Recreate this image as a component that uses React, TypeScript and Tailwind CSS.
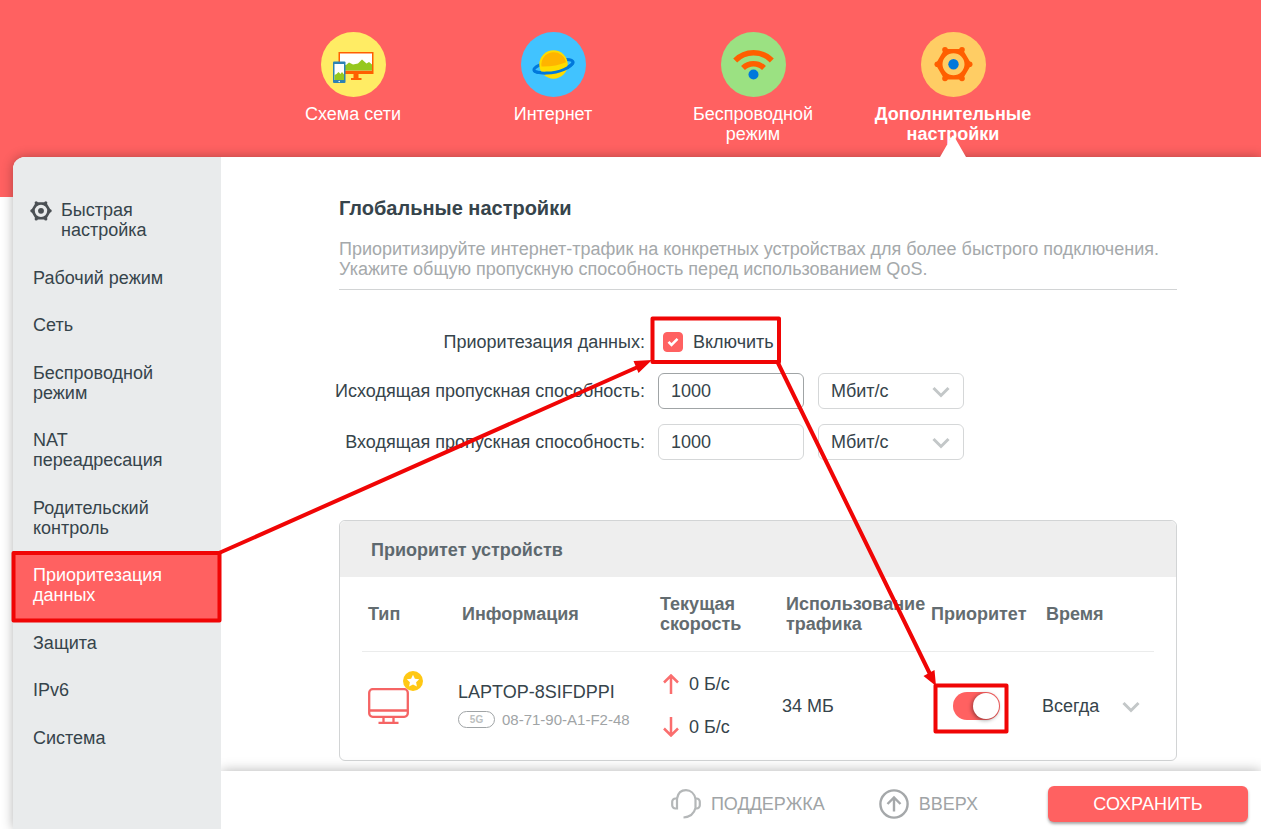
import type { ReactNode } from 'react'

const navItems = [
  { label: 'Схема сети', icon: <NetworkIcon />, active: false },
  { label: 'Интернет', icon: <PlanetIcon />, active: false },
  { label: 'Беспроводной режим', icon: <WifiIcon />, active: false },
  { label: 'Дополнительные настройки', icon: <GearIcon />, active: true },
]

const menuItems = [
  'Рабочий режим',
  'Сеть',
  'Беспроводной режим',
  'NAT переадресация',
  'Родительский контроль',
  'Приоритезация данных',
  'Защита',
  'IPv6',
  'Система',
]

const activeItem = 'Приоритезация данных'

function NetworkIcon() {
  return (
    <svg viewBox="0 0 65 65" className="w-[65px] h-[65px]" aria-hidden="true">
      <circle cx="32.5" cy="32.5" r="32.5" fill="#ffec64" />
      <rect x="17.5" y="20" width="35" height="22" fill="#ff5f00" />
      <rect x="19" y="21.5" width="32" height="17" fill="#fff" />
      <path d="M19 38.500V34l6-1 3-2.500 4 2 5-1 4-4 4.500 4 2.500-1.500 3 2.500v6z" fill="#96c81e" />
      <path d="M32.500 42h5v4h3v2h-10.500v-2h2.500z" fill="#ff5f00" />
      <rect x="12" y="29.5" width="12.5" height="21.5" rx="1" fill="#2d82b4" />
      <rect x="13.5" y="32" width="9.5" height="16" fill="#fff" />
      <path d="M13.500 48v-5l2-1 2-2 2 2 1.500-2 2 2.500V48z" fill="#96c81e" />
      <circle cx="18.2" cy="49.5" r="0.8" fill="#fff" />
    </svg>
  )
}

function PlanetIcon() {
  return (
    <svg viewBox="0 0 65 65" className="w-[65px] h-[65px]" aria-hidden="true">
      <circle cx="32.5" cy="32.5" r="32.5" fill="#41c3ff" />
      <ellipse cx="32.5" cy="34" rx="20" ry="5.2" transform="rotate(-12 32.5 34)" fill="none" stroke="#0078dc" strokeWidth="3" />
      <circle cx="32.5" cy="32.5" r="14.2" fill="#ffdc00" />
      <path d="M20.500 34.500a12.300 12.300 0 0 1 11-14.200a12.300 12.300 0 0 1 13.500 10q-10 4.500-24.500 4.200z" fill="#ffb400" />
      <path d="M13 38.400c3 4 20 3.500 30-.9c5-2.200 8.500-5 9.200-7.200" fill="none" stroke="#0078dc" strokeWidth="3" />
    </svg>
  )
}

function WifiIcon() {
  return (
    <svg viewBox="0 0 65 65" className="w-[65px] h-[65px]" aria-hidden="true">
      <circle cx="32.5" cy="32.5" r="32.5" fill="#9be182" />
      <g fill="none" stroke="#ff5f00" strokeWidth="5.5">
        <path d="M14.200 28.500a25.500 25.500 0 0 1 36.600 0" />
        <path d="M22 36a15 15 0 0 1 21 0" />
      </g>
      <circle cx="32.5" cy="42.5" r="5" fill="#0078dc" />
    </svg>
  )
}

function GearShape({ center, body }: { center: string; body: string }) {
  return (
    <>
      <g fill={body}>
        <path
          fillRule="evenodd"
          d="M23.500 17h18l9 15.200-9 15.300h-18l-9-15.300zM32.500 21.200a11 11 0 1 0 0 22a11 11 0 0 0 0-22z"
        />
        <circle cx="24" cy="17.8" r="2.8" />
        <circle cx="41" cy="17.8" r="2.8" />
        <circle cx="24" cy="46.5" r="2.8" />
        <circle cx="41" cy="46.5" r="2.8" />
        <circle cx="16.3" cy="32.2" r="2.8" />
        <circle cx="48.7" cy="32.2" r="2.8" />
      </g>
      <circle cx="32.5" cy="32.2" r="5.2" fill={center} />
    </>
  )
}

function GearIcon() {
  return (
    <svg viewBox="0 0 65 65" className="w-[65px] h-[65px]" aria-hidden="true">
      <circle cx="32.5" cy="32.5" r="32.5" fill="#ffcd64" />
      <GearShape center="#0078dc" body="#ff5f00" />
    </svg>
  )
}

function Chevron({ className }: { className: string }) {
  return (
    <svg viewBox="0 0 18 12" className={`w-[18px] h-3 pointer-events-none ${className}`} aria-hidden="true">
      <path d="M1.500 2l7.500 7.500L16.500 2" fill="none" stroke="#c3c7c8" strokeWidth="3" />
    </svg>
  )
}

function SpeedArrow({ down }: { down?: boolean }) {
  return (
    <svg viewBox="0 0 16 20" className="w-4 h-5" aria-hidden="true">
      <path
        d={down ? 'M8 0v19M1 11.500l7 7 7-7' : 'M8 20V1M1 8.500l7-7 7 7'}
        fill="none"
        stroke="#fa6e6e"
        strokeWidth="2.5"
      />
    </svg>
  )
}

function DeviceIcon() {
  return (
    <svg viewBox="0 0 56 70" className="w-14 h-[70px]" role="img" aria-label="Компьютер">
      <g fill="none" stroke="#f56464" strokeWidth="2.3">
        <rect x="1.2" y="18.2" width="38.6" height="27.6" rx="3.5" />
        <path d="M1 39.500h39M15.500 46v5M25.500 46v5M10.500 51.800h20" />
      </g>
      <circle cx="45" cy="10" r="10" fill="#ffc814" />
      <path d="M45 3.700l1.900 4 4.300.6-3.100 3 .8 4.300-3.900-2-3.900 2 .8-4.300-3.100-3 4.300-.6z" fill="#fff" />
    </svg>
  )
}

function Header() {
  return (
    <header className="h-[197px] bg-[#ff6161] pl-[45px] pt-8">
      <nav className="flex justify-center">
        {navItems.map((item) => (
          <a
            key={item.label}
            href="#"
            className={`relative flex h-[125px] w-[200px] flex-col items-center gap-[7px] px-5 text-center text-white ${item.active ? 'font-bold' : ''}`}
          >
            {item.icon}
            <span>{item.label}</span>
            {item.active && (
              <svg viewBox="0 0 26 23" className="absolute bottom-0 left-[87px] z-20 h-[23px] w-[26px]" aria-hidden="true">
                <path d="M0 23L11.500 3q1.500-3 3 0L26 23z" fill="#fff" />
              </svg>
            )}
          </a>
        ))}
      </nav>
    </header>
  )
}

function Sidebar() {
  return (
    <aside className="relative z-10 w-[208px] shrink-0 rounded-tl-xl bg-[#e9ebec] pt-[29px]">
      <ul>
        <li>
          <a href="#" className="flex gap-[9px] pt-[14px] pr-12 pb-[14px] pl-[17px]">
            <svg viewBox="13 13 39 39" className="h-[22px] w-[22px] shrink-0" aria-hidden="true">
              <GearShape center="#4b5054" body="#4b5054" />
            </svg>
            Быстрая настройка
          </a>
        </li>
        {menuItems.map((item, i) => (
          <li key={item}>
            <a
              href="#"
              className={`block pt-[14px] pr-12 pl-5 ${i % 2 ? 'pb-[14px]' : 'pb-[13px]'} ${item === activeItem ? 'bg-[#ff6161] text-white' : ''}`}
            >
              {item}
            </a>
          </li>
        ))}
      </ul>
    </aside>
  )
}

function FormRow({ id, label, children }: { id: string; label: string; children: ReactNode }) {
  return (
    <div className="flex items-center">
      <label htmlFor={id} className="mr-[13px] flex w-[306px] justify-end whitespace-nowrap">
        {label}
      </label>
      {children}
    </div>
  )
}

function Bandwidth({ id, border }: { id: string; border: string }) {
  return (
    <div className="flex gap-[14px]">
      <input id={id} defaultValue="1000" className={`h-9 w-[146px] rounded-md border px-3 outline-none ${border}`} />
      <div className="relative">
        <select
          aria-label="Единица измерения"
          className="h-9 w-[146px] appearance-none rounded-md border border-[#d5d7d8] bg-white px-3 outline-none"
        >
          <option>Мбит/с</option>
          <option>Кбит/с</option>
        </select>
        <Chevron className="absolute top-[13px] right-[14px]" />
      </div>
    </div>
  )
}

function Settings() {
  return (
    <form className="mt-9 flex flex-col gap-[15px]">
      <FormRow id="qos" label="Приоритезация данных:">
        <div className="flex h-8 items-center gap-[10px] pl-[5px]">
          <span className="relative block h-5 w-5">
            <input
              id="qos"
              type="checkbox"
              defaultChecked
              className="block h-5 w-5 appearance-none rounded border border-[#d5d7d8] checked:border-[#ff6161] checked:bg-[#ff6161]"
            />
            <svg viewBox="0 0 20 20" className="pointer-events-none absolute inset-0" aria-hidden="true">
              <path d="M5.500 9.800l3 3 6-6" fill="none" stroke="#fff" strokeWidth="2.6" />
            </svg>
          </span>
          <label htmlFor="qos">Включить</label>
        </div>
      </FormRow>
      <FormRow id="upload" label="Исходящая пропускная способность:">
        <Bandwidth id="upload" border="border-[#a0a4a6]" />
      </FormRow>
      <FormRow id="download" label="Входящая пропускная способность:">
        <Bandwidth id="download" border="border-[#d5d7d8]" />
      </FormRow>
    </form>
  )
}

function DeviceTable() {
  return (
    <section className="mt-[60px] rounded-md border border-[#d2d4d5]">
      <h2 className="rounded-t-md bg-[#eee] px-[31px] pt-[19px] pb-[17px] font-bold text-[#5d686e]">
        Приоритет устройств
      </h2>
      <div className="px-[22px]">
        <table className="w-full table-fixed text-left">
          <colgroup>
            <col className="w-[92px]" />
            <col className="w-[198px]" />
            <col className="w-[126px]" />
            <col className="w-[145px]" />
            <col className="w-[115px]" />
            <col />
          </colgroup>
          <thead>
            <tr className="h-[74px] border-b border-[#ebecec] text-[#636c70]">
              <th className="pl-[6px]">Тип</th>
              <th className="pl-2">Информация</th>
              <th className="pl-2">Текущая скорость</th>
              <th className="pl-2">Использование трафика</th>
              <th className="pl-2">Приоритет</th>
              <th className="pl-2">Время</th>
            </tr>
          </thead>
          <tbody>
            <tr className="h-[109px]">
              <td className="pl-[6px]">
                <DeviceIcon />
              </td>
              <td className="pl-1">
                <div>LAPTOP-8SIFDPPI</div>
                <div className="mt-2 flex items-center gap-[7px] text-[15px] leading-5 text-[#a0a4a6]">
                  <span className="flex h-[17px] w-[37px] items-center justify-center rounded-full border border-[#a0a4a6] text-[10px] font-bold text-[#bcbfc0]">
                    5G
                  </span>
                  08-71-90-A1-F2-48
                </div>
              </td>
              <td className="pl-[11px]">
                <div className="flex items-center gap-[10px]">
                  <SpeedArrow />0 Б/с
                </div>
                <div className="mt-[23px] flex items-center gap-[10px]">
                  <SpeedArrow down />0 Б/с
                </div>
              </td>
              <td className="pl-1">34 МБ</td>
              <td className="pl-[30px]">
                <button
                  type="button"
                  role="switch"
                  aria-checked="true"
                  aria-label="Приоритет"
                  className="flex h-7 w-[47px] items-center justify-end rounded-full bg-[#ff6161] pr-px"
                >
                  <span className="h-[26px] w-[26px] rounded-full bg-white shadow-[-1px_1px_4px_rgba(0,0,0,0.45)]" />
                </button>
              </td>
              <td className="pl-1">
                <div className="relative">
                  <select aria-label="Время" className="w-full appearance-none bg-transparent outline-none">
                    <option>Всегда</option>
                    <option>1 час</option>
                  </select>
                  <Chevron className="absolute top-[5px] right-[14px]" />
                </div>
              </td>
            </tr>
          </tbody>
        </table>
      </div>
    </section>
  )
}

function Footer() {
  return (
    <footer className="relative flex h-[58px] items-center justify-end bg-white pt-2 pr-[13px] text-[#a0a4a6] shadow-[0_0_12px_rgba(0,0,0,0.3)]">
      <a href="#" className="flex items-center gap-[10px]">
        <svg viewBox="0 0 30 30" className="h-[30px] w-[30px]" fill="none" stroke="#b4b7b8" strokeWidth="2.2" aria-hidden="true">
          <path d="M6 9.500C7 4 10.500 1.200 15 1.200S23.500 4.500 24.500 10v9c-1.500 6-5.500 9-12 9.500" />
          <path d="M6 9.500v10H4.500A3.300 3.300 0 0 1 1.200 16v-3a3.300 3.300 0 0 1 3.300-3.500zM24.500 9.500h1a3.300 3.300 0 0 1 3.300 3.500v3a3.300 3.300 0 0 1-3.300 3.500h-1" />
        </svg>
        ПОДДЕРЖКА
      </a>
      <a href="#" className="ml-[54px] flex items-center gap-[10px]">
        <svg viewBox="0 0 30 30" className="h-[30px] w-[30px]" fill="none" stroke="#a5a8aa" strokeWidth="2.4" aria-hidden="true">
          <circle cx="15" cy="15" r="13.6" />
          <path d="M15 22.500V9M8.500 15L15 8.500l6.500 6.500" />
        </svg>
        ВВЕРХ
      </a>
      <button
        type="button"
        className="ml-[70px] h-9 w-[200px] rounded-md bg-[#ff6161] text-white shadow-[0_2px_3px_rgba(0,0,0,0.35)]"
      >
        СОХРАНИТЬ
      </button>
    </footer>
  )
}

// Step-by-step marks drawn over the page
function Annotations() {
  return (
    <svg
      width="1261"
      height="829"
      viewBox="0 0 1261 829"
      className="pointer-events-none absolute top-0 left-0 z-30"
      aria-hidden="true"
    >
      <g fill="none" stroke="#f00505" strokeWidth="4" strokeLinejoin="round">
        <rect x="13.5" y="553" width="206" height="67.5" />
        <rect x="652.5" y="318.5" width="126.5" height="43.5" />
        <rect x="935.5" y="685.5" width="71" height="46" />
        <path d="M219 553L640 366M778 363l152 311" />
      </g>
      <path d="M652 360l-18.500 1 5 12zM936 686l-1.500-16-11 6z" fill="#f00505" />
    </svg>
  )
}

export default function App() {
  return (
    <div className="relative flex min-h-screen flex-col overflow-hidden bg-white font-['Liberation_Sans',Arial,sans-serif] text-lg leading-5 text-[#36444b]">
      <Header />
      <div className="-mt-10 ml-[13px] flex flex-1 rounded-tl-xl bg-white shadow-[0_0_12px_rgba(0,0,0,0.3)]">
        <Sidebar />
        <div className="flex min-w-0 flex-1 flex-col">
          <main className="flex-1 pt-[39px] pr-[84px] pb-[9px] pl-[118px]">
            <h1 className="text-xl leading-6 font-bold">Глобальные настройки</h1>
            <p className="mt-[19px] border-b border-[#d2d4d5] pb-[10px] text-[#a5a9ab]">
              Приоритизируйте интернет-трафик на конкретных устройствах для более быстрого подключения. Укажите общую
              пропускную способность перед использованием QoS.
            </p>
            <Settings />
            <DeviceTable />
          </main>
          <Footer />
        </div>
      </div>
      <Annotations />
    </div>
  )
}
